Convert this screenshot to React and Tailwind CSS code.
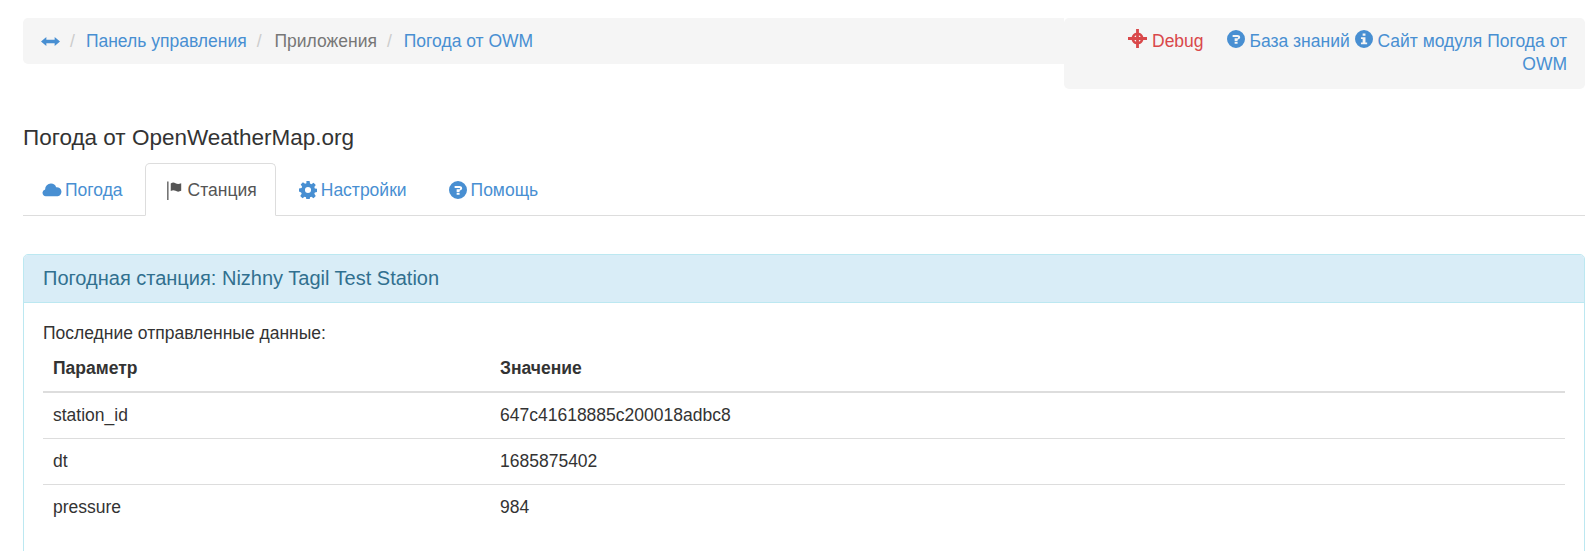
const LINK = "text-[#488fd2]";

function Glyph({ children, className = "", size = 16 }) {
  return (
    <svg width={size} height={size} viewBox="0 0 16 16" fill="currentColor" className={`inline-block shrink-0 align-[-1px] ${className}`}>
      {children}
    </svg>
  );
}

const ResizeIcon = () => (
  <Glyph size={19}>
    <path d="M0 8l4.5-3.800V6.600h7V4.200L16 8l-4.500 3.800V9.400h-7v2.400z" />
  </Glyph>
);

const CloudIcon = () => (
  <Glyph size={20}>
    <path d="M3 13a2.800 2.800 0 0 1-.5-5.500A4.600 4.600 0 0 1 7.200 2.800a4.300 4.300 0 0 1 4.100 3 3.600 3.600 0 0 1 1.200 7.200z" />
  </Glyph>
);

const FlagIcon = () => (
  <Glyph size={19}>
    <path d="M1 0.500h1.100v15.500H1z" />
    <path d="M4 2c1.500-.9 2.800-.9 4 -.1 1.300.8 3 .8 4.800 0v6.400c-1.800.9-3.500.9-4.800 0-1.200-.8-2.500-.8-4 .1z" />
  </Glyph>
);

const CogIcon = () => (
  <Glyph size={18}>
    <path fillRule="evenodd" d="M6.600 0h2.800l.4 2.300 1.200.5 1.900-1.300 2 2-1.300 1.900.5 1.200 2.300.4v2.800l-2.300.4-.5 1.200 1.300 1.900-2 2-1.900-1.300-1.200.5-.4 2.300H6.600l-.4-2.300-1.200-.5-1.900 1.300-2-2 1.300-1.900-.5-1.200L0 9.400V6.600l2.300-.4.5-1.200-1.300-1.900 2-2 1.900 1.300 1.200-.5zM8 5.300a2.700 2.700 0 1 0 0 5.400 2.700 2.700 0 0 0 0-5.400z" />
  </Glyph>
);

const HelpIcon = () => (
  <Glyph size={18}>
    <path fillRule="evenodd" d="M8 0a8 8 0 1 1 0 16A8 8 0 0 1 8 0zM5 4.500v1.800h4.300c.4 0 .6.200.6.500s-.2.500-.6.500H6.800v2.400h2.600V8.600c1.300-.2 2.300-.9 2.300-2.100 0-1.300-1.100-2-2.500-2zM6.800 10.400v1.900h2.600v-1.900z" />
  </Glyph>
);

const InfoIcon = () => (
  <Glyph size={18}>
    <path fillRule="evenodd" d="M8 0a8 8 0 1 1 0 16A8 8 0 0 1 8 0zM6.800 3v2h2.500V3zM5.300 6.400v1.500h1.500v3.200H5.300v1.500h5.500v-1.500H9.300V6.400z" />
  </Glyph>
);

const DebugIcon = () => (
  <Glyph size={19}>
    <path fillRule="evenodd" d="M6.800 0h2.400v3.100a5 5 0 0 1 3.700 3.700H16v2.400h-3.100a5 5 0 0 1-3.700 3.700V16H6.800v-3.100a5 5 0 0 1-3.700-3.700H0V6.800h3.100a5 5 0 0 1 3.700-3.700zM6.800 5.300a3 3 0 0 0-1.500 1.500h1.500zM9.200 5.300v1.500h1.500a3 3 0 0 0-1.500-1.500zM5.300 9.200a3 3 0 0 0 1.500 1.500V9.200zM9.200 9.200v1.500a3 3 0 0 0 1.500-1.500z" />
  </Glyph>
);

function Crumbs() {
  return (
    <div className="flex-1 h-[46px] bg-[#f5f5f5] rounded-l-[5px] pl-[18px] flex items-center">
      <a className={`${LINK} flex items-center`}><ResizeIcon /></a>
      <span className="text-[#ccc] px-[7px] ml-[3px]">/</span>
      <a className={`${LINK} ml-[4px]`}>Панель управления</a>
      <span className="text-[#ccc] px-[7px] ml-[3px] mr-[6px]">/</span>
      <span className="text-[#777]">Приложения</span>
      <span className="text-[#ccc] px-[7px] ml-[3px] mr-[5px]">/</span>
      <a className={LINK}>Погода от OWM</a>
    </div>
  );
}

function QuickLinks() {
  return (
    <div className="w-[521px] h-[71px] bg-[#f5f5f5] rounded-[5px] pt-[11px] pr-[18px] pl-[18px] text-right">
      <a className="text-[#d9484a]">
        <DebugIcon /> Debug
      </a>
      <a className={`${LINK} ml-[23px]`}>
        <HelpIcon /> База знаний
      </a>{" "}
      <a className={LINK}>
        <InfoIcon /> Сайт модуля Погода от OWM
      </a>
    </div>
  );
}

function Tabs() {
  const tabs = [
    { label: "Погода", icon: <CloudIcon />, pad: "pl-[19px] pr-[20px] gap-[3px]" },
    { label: "Станция", icon: <FlagIcon />, active: true, pad: "pl-[20px] pr-[18px] gap-[3px]" },
    { label: "Настройки", icon: <CogIcon />, pad: "pl-[21px] pr-[20px] gap-[4px]" },
    { label: "Помощь", icon: <HelpIcon />, pad: "px-[20px] gap-[4px]" },
  ];
  return (
    <ul className="flex border-b border-[#ddd] h-[53px]">
      {tabs.map(tab => (
        <li key={tab.label} className="mr-[2px] mb-[-1px]">
          <a
            className={
              tab.active
                ? `flex items-center pt-[1px] h-[53px] ${tab.pad} bg-white border border-[#ddd] border-b-white rounded-t-[5px] text-[#555]`
                : `flex items-center pt-[1px] h-[53px] ${tab.pad} ${LINK}`
            }
          >
            {tab.icon}
            {tab.label}
          </a>
        </li>
      ))}
    </ul>
  );
}

function StationPanel() {
  const rows = [
    ["station_id", "647c41618885c200018adbc8"],
    ["dt", "1685875402"],
    ["pressure", "984"],
  ];
  return (
    <div className="mt-[38px] border border-[#bce8f1] rounded-[5px]">
      <h3 className="h-[48px] px-[19px] flex items-center bg-[#d9edf7] border-b border-[#bce8f1] text-[#31708f] text-[20px] rounded-t-[4px]">
        Погодная станция: Nizhny Tagil Test Station
      </h3>
      <div className="px-[19px] pt-[19px] pb-[30px]">
        <p className="h-[23px]">Последние отправленные данные:</p>
        <table className="w-full">
          <thead>
            <tr className="border-b-2 border-[#ddd]">
              <th className="h-[47px] w-[447px] px-[10px] text-left font-bold">Параметр</th>
              <th className="px-[10px] text-left font-bold">Значение</th>
            </tr>
          </thead>
          <tbody>
            {rows.map(([name, value], i) => (
              <tr key={name} className={i > 0 ? "border-t border-[#ddd]" : ""}>
                <td className="h-[46px] px-[10px]">{name}</td>
                <td className="px-[10px]">{value}</td>
              </tr>
            ))}
          </tbody>
        </table>
      </div>
    </div>
  );
}

export default function App() {
  return (
    <div className="h-[551px] overflow-hidden bg-white pl-[23px] pr-[2px] pt-[18px] font-['Liberation_Sans',Arial,sans-serif] text-[17.5px] leading-[23px] text-[#333]">
      <div className="flex items-start">
        <Crumbs />
        <QuickLinks />
      </div>
      <h2 className="mt-[34px] text-[22.5px] leading-[30px]">Погода от OpenWeatherMap.org</h2>
      <div className="mt-[10px]">
        <Tabs />
        <StationPanel />
      </div>
    </div>
  );
}
